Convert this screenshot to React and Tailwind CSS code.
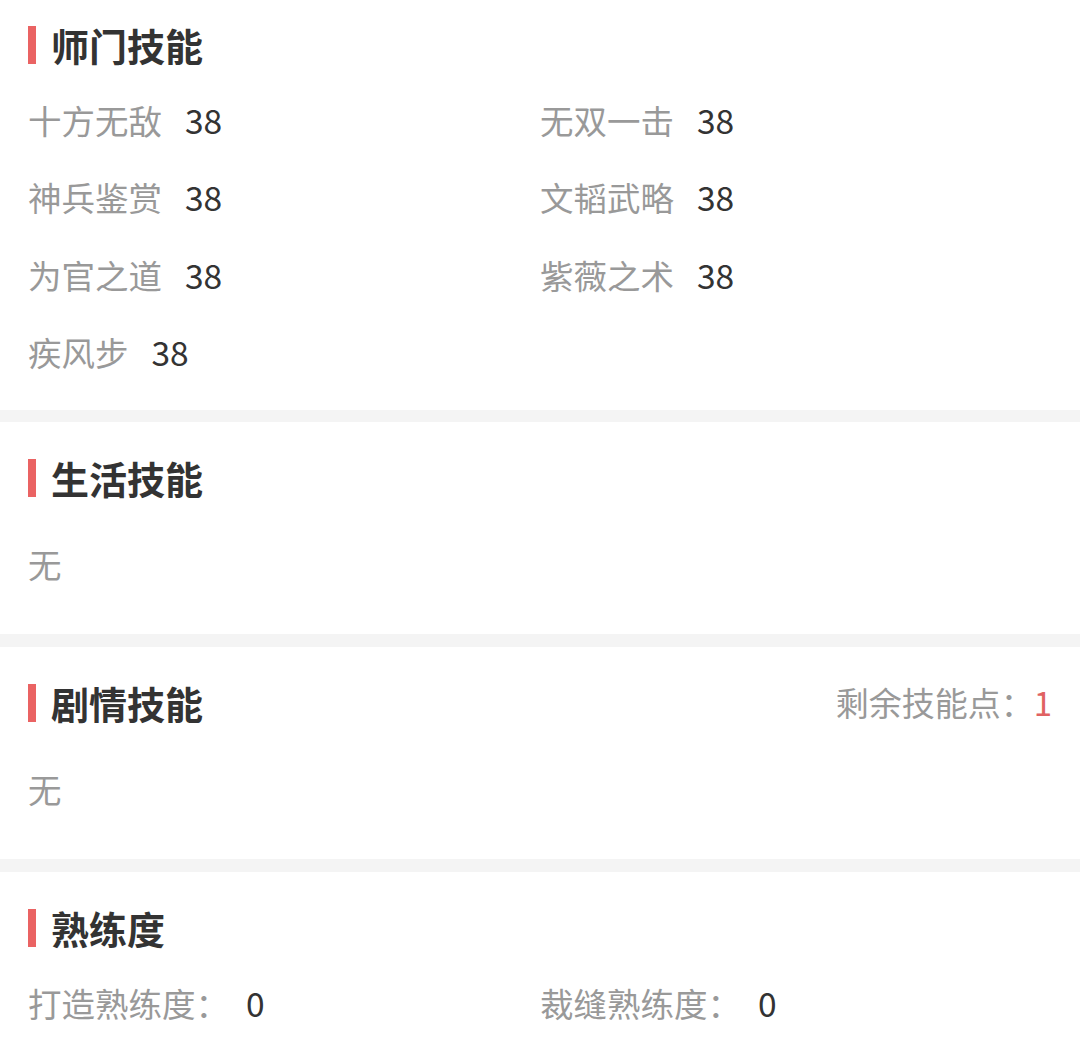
const font = { fontFamily: '"Noto Sans CJK SC", "Noto Sans", sans-serif' };

const masterSkills = [
  ['十方无敌', 38],
  ['无双一击', 38],
  ['神兵鉴赏', 38],
  ['文韬武略', 38],
  ['为官之道', 38],
  ['紫薇之术', 38],
  ['疾风步', 38],
];

function Title({ children, right }) {
  return (
    <div className="flex h-12 items-center justify-between pr-[28px]">
      <div className="flex items-center">
        <span className="h-[38px] w-2 bg-[#ea6363]" />
        <h2 className="ml-[15px] text-[38px] font-bold leading-none text-[#333]">{children}</h2>
      </div>
      {right}
    </div>
  );
}

function Item({ label, value, gap = 'gap-[23px]' }) {
  return (
    <div className={`flex h-[77.5px] items-center ${gap} text-[33.5px]`}>
      <span className="text-[#999]">{label}</span>
      <span className="text-[#333]">{value}</span>
    </div>
  );
}

export default function App() {
  return (
    <div className="w-[1080px] bg-white pl-[28px]" style={font}>
      {/* 师门技能 */}
      <section className="pt-[21px] pb-[19px]">
        <Title>师门技能</Title>
        <div className="mt-[12px] grid grid-cols-2 pr-[28px]">
          {masterSkills.map(([name, lv]) => (
            <Item key={name} label={name} value={lv} />
          ))}
        </div>
      </section>
      <div className="-ml-[28px] h-[12px] bg-[#f4f4f4]" />

      {/* 生活技能 */}
      <section className="pt-[32px] pb-[46px]">
        <Title>生活技能</Title>
        <p className="mt-[38px] h-12 text-[33.5px] leading-[48px] text-[#999]">无</p>
      </section>
      <div className="-ml-[28px] h-[13px] bg-[#f4f4f4]" />

      {/* 剧情技能 */}
      <section className="pt-[32px] pb-[46px]">
        <Title
          right={
            <span className="text-[33px] text-[#999]">
              剩余技能点：<span className="text-[#e06262]">1</span>
            </span>
          }
        >
          剧情技能
        </Title>
        <p className="mt-[38px] h-12 text-[33.5px] leading-[48px] text-[#999]">无</p>
      </section>
      <div className="-ml-[28px] h-[13px] bg-[#f4f4f4]" />

      {/* 熟练度 */}
      <section className="pt-[32px] pb-[20px]">
        <Title>熟练度</Title>
        <div className="mt-[12px] grid grid-cols-2 pr-[28px]">
          <Item label="打造熟练度：" value={0} gap="gap-[17px]" />
          <Item label="裁缝熟练度：" value={0} gap="gap-[17px]" />
        </div>
      </section>
    </div>
  );
}
